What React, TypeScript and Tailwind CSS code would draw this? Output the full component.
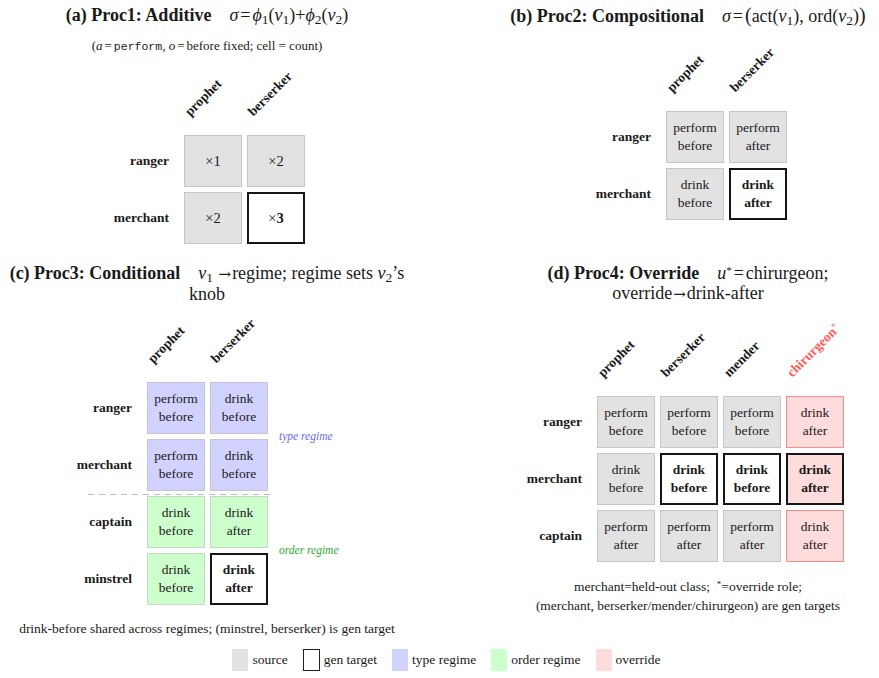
import React from "react";

type Kind = "src" | "tgt" | "type" | "order" | "over" | "overTgt";

interface CellData {
  kind: Kind;
  content: React.ReactNode;
}

const kindClass: Record<Kind, string> = {
  src: "bg-[#e2e2e2] border border-[#c6c6c6]",
  tgt: "bg-white border-2 border-[#161616] font-bold",
  type: "bg-[#d2d2ff] border border-[#c4c4d8]",
  order: "bg-[#ccffcc] border border-[#c4d8c4]",
  over: "bg-[#ffdcdc] border border-[#ff8a8a]",
  overTgt: "bg-[#ffdcdc] border-2 border-[#161616] font-bold",
};

const two = (a: string, b: string) => (
  <>
    <span>{a}</span>
    <span>{b}</span>
  </>
);

const Cell: React.FC<CellData> = ({ kind, content }) => (
  <div
    className={`w-[58px] h-[52px] flex flex-col items-center justify-center text-[13.5px] leading-[18px] ${kindClass[kind]}`}
  >
    {content}
  </div>
);

interface Col {
  label: string;
  star?: boolean;
}

const HeaderRow: React.FC<{ cols: Col[] }> = ({ cols }) => (
  <div className="flex gap-[5px]">
    <div className="w-[85px]" />
    {cols.map((c) => (
      <div key={c.label} className="w-[58px] h-[50px] flex items-end">
        <span
          className={`ml-[8px] mb-[12px] origin-bottom-left -rotate-45 whitespace-nowrap font-bold text-[13.5px] leading-none ${
            c.star ? "text-[#ff5c5c]" : ""
          }`}
        >
          {c.label}
          {c.star && <sup className="font-normal text-[9px]">*</sup>}
        </span>
      </div>
    ))}
  </div>
);

const Row: React.FC<{ label: string; cells: CellData[] }> = ({ label, cells }) => (
  <div className="flex gap-[5px]">
    <div className="w-[85px] pr-[10px] flex items-center justify-end font-bold text-[13.5px]">
      {label}
    </div>
    {cells.map((c, i) => (
      <Cell key={i} {...c} />
    ))}
  </div>
);

const I: React.FC<{ children: React.ReactNode }> = ({ children }) => (
  <i className="font-['Liberation_Serif',serif]">{children}</i>
);

const Eq = () => <span className="mx-[2px]">=</span>;

// long math arrow; Liberation's own glyph sits too low
const Arrow = () => (
  <span className="font-['DejaVu_Serif',serif] text-[15px] mx-[1px]">→</span>
);

const basic: Col[] = [{ label: "prophet" }, { label: "berserker" }];

export default function App() {
  return (
    <div className="w-[879px] h-[678px] bg-white flex flex-col font-['Liberation_Serif',serif] text-[#1a1a1a] overflow-hidden">
      {/* top row */}
      <div className="flex h-[250px]">
        {/* (a) */}
        <div className="w-[414px] flex flex-col items-center pt-[4px]">
          <div className="text-[18px] leading-[22px] whitespace-nowrap">
            <span className="font-bold">(a) Proc1: Additive</span>
            <span className="ml-[18px]">
              <I>σ</I>
              <Eq />
              <I>ϕ</I>
              <sub>1</sub>(<I>v</I>
              <sub>1</sub>)+<I>ϕ</I>
              <sub>2</sub>(<I>v</I>
              <sub>2</sub>)
            </span>
          </div>
          <div className="mt-[12px] text-[13px] leading-[16px] whitespace-nowrap">
            (<I>a</I>
            <Eq />
            <span className="font-['Liberation_Mono',monospace] text-[11.5px]">perform</span>,{" "}
            <I>o</I>
            <Eq />
            before fixed; cell = count)
          </div>
          <div className="self-start ml-[94px] mt-[25px] flex flex-col gap-[5px]">
            <HeaderRow cols={basic} />
            <Row
              label="ranger"
              cells={[
                { kind: "src", content: <span className="text-[14.5px]">×1</span> },
                { kind: "src", content: <span className="text-[14.5px]">×2</span> },
              ]}
            />
            <Row
              label="merchant"
              cells={[
                { kind: "src", content: <span className="text-[14.5px]">×2</span> },
                {
                  kind: "tgt",
                  content: (
                    <span className="text-[14.5px]">
                      <span className="font-normal">×</span>3
                    </span>
                  ),
                },
              ]}
            />
          </div>
        </div>

        {/* (b) */}
        <div className="ml-[83px] w-[382px] flex flex-col items-center pt-[4px]">
          <div className="text-[18px] leading-[22px] whitespace-nowrap">
            <span className="font-bold">(b) Proc2: Compositional</span>
            <span className="ml-[18px]">
              <I>σ</I>
              <Eq />
              <span className="text-[20px]">(</span>act(<I>v</I>
              <sub>1</sub>), ord(<I>v</I>
              <sub>2</sub>)<span className="text-[20px]">)</span>
            </span>
          </div>
          <div className="self-start ml-[79px] mt-[29px] flex flex-col gap-[5px]">
            <HeaderRow cols={basic} />
            <Row
              label="ranger"
              cells={[
                { kind: "src", content: two("perform", "before") },
                { kind: "src", content: two("perform", "after") },
              ]}
            />
            <Row
              label="merchant"
              cells={[
                { kind: "src", content: two("drink", "before") },
                { kind: "tgt", content: two("drink", "after") },
              ]}
            />
          </div>
        </div>
      </div>

      {/* bottom row */}
      <div className="flex h-[399px]">
        {/* (c) */}
        <div className="w-[414px] flex flex-col items-center pt-[13px]">
          <div className="text-[18px] leading-[20px] text-center whitespace-nowrap">
            <span className="font-bold">(c) Proc3: Conditional</span>
            <span className="ml-[18px]">
              <I>v</I>
              <sub>1</sub> <Arrow />
              regime; regime sets <I>v</I>
              <sub>2</sub>’s
            </span>
            <br />
            knob
          </div>
          <div className="self-start ml-[57px] mt-[23px] flex flex-col gap-[5px]">
            <HeaderRow cols={basic} />
            <div className="flex items-center">
              <div className="flex flex-col gap-[5px]">
                <Row
                  label="ranger"
                  cells={[
                    { kind: "type", content: two("perform", "before") },
                    { kind: "type", content: two("drink", "before") },
                  ]}
                />
                <Row
                  label="merchant"
                  cells={[
                    { kind: "type", content: two("perform", "before") },
                    { kind: "type", content: two("drink", "before") },
                  ]}
                />
              </div>
              <span className="ml-[11px] italic text-[11.5px] text-[#6a6af2]">type regime</span>
            </div>
            <svg width="184" height="1" className="ml-[31px] -mt-[2px] -mb-[4px]">
              <line x1="0" y1="0.5" x2="184" y2="0.5" stroke="#bdbdbd" strokeWidth="1" strokeDasharray="6 5" />
            </svg>
            <div className="flex items-center">
              <div className="flex flex-col gap-[5px]">
                <Row
                  label="captain"
                  cells={[
                    { kind: "order", content: two("drink", "before") },
                    { kind: "order", content: two("drink", "after") },
                  ]}
                />
                <Row
                  label="minstrel"
                  cells={[
                    { kind: "order", content: two("drink", "before") },
                    { kind: "tgt", content: two("drink", "after") },
                  ]}
                />
              </div>
              <span className="ml-[11px] italic text-[11.5px] text-[#2ea82e]">order regime</span>
            </div>
          </div>
          <div className="mt-[16px] text-[13.5px] leading-[16px] whitespace-nowrap">
            drink-before shared across regimes; (minstrel, berserker) is gen target
          </div>
        </div>

        {/* (d) */}
        <div className="ml-[83px] w-[382px] flex flex-col items-center pt-[13px]">
          <div className="text-[18px] leading-[20px] text-center whitespace-nowrap">
            <span className="font-bold">(d) Proc4: Override</span>
            <span className="ml-[18px]">
              <I>u</I>
              <sup className="text-[11px]">*</sup>
              <Eq />
              chirurgeon;
            </span>
            <br />
            override
            <Arrow />
            drink-after
          </div>
          <div className="self-start ml-[10px] mt-[37px] flex flex-col gap-[5px]">
            <HeaderRow
              cols={[
                { label: "prophet" },
                { label: "berserker" },
                { label: "mender" },
                { label: "chirurgeon", star: true },
              ]}
            />
            <Row
              label="ranger"
              cells={[
                { kind: "src", content: two("perform", "before") },
                { kind: "src", content: two("perform", "before") },
                { kind: "src", content: two("perform", "before") },
                { kind: "over", content: two("drink", "after") },
              ]}
            />
            <Row
              label="merchant"
              cells={[
                { kind: "src", content: two("drink", "before") },
                { kind: "tgt", content: two("drink", "before") },
                { kind: "tgt", content: two("drink", "before") },
                { kind: "overTgt", content: two("drink", "after") },
              ]}
            />
            <Row
              label="captain"
              cells={[
                { kind: "src", content: two("perform", "after") },
                { kind: "src", content: two("perform", "after") },
                { kind: "src", content: two("perform", "after") },
                { kind: "over", content: two("drink", "after") },
              ]}
            />
          </div>
          <div className="mt-[15px] text-[13.5px] leading-[19px] text-center whitespace-nowrap">
            merchant=held-out class;&nbsp;&nbsp;
            <sup className="text-[9px]">*</sup>=override role;
            <br />
            (merchant, berserker/mender/chirurgeon) are gen targets
          </div>
        </div>
      </div>

      {/* legend */}
      <div className="h-[22px] flex items-center justify-center pl-[14px] gap-[15px] text-[13.5px]">
        <div className="flex items-center gap-[4px]">
          <div className="w-[16px] h-[22px] bg-[#e2e2e2]" />
          <span>source</span>
        </div>
        <div className="flex items-center gap-[4px]">
          <div className="w-[17px] h-[22px] bg-white border-[1.5px] border-[#222]" />
          <span>gen target</span>
        </div>
        <div className="flex items-center gap-[4px]">
          <div className="w-[16px] h-[22px] bg-[#d2d2ff]" />
          <span>type regime</span>
        </div>
        <div className="flex items-center gap-[4px]">
          <div className="w-[16px] h-[22px] bg-[#ccffcc]" />
          <span>order regime</span>
        </div>
        <div className="flex items-center gap-[4px]">
          <div className="w-[16px] h-[22px] bg-[#ffdcdc]" />
          <span>override</span>
        </div>
      </div>
    </div>
  );
}
